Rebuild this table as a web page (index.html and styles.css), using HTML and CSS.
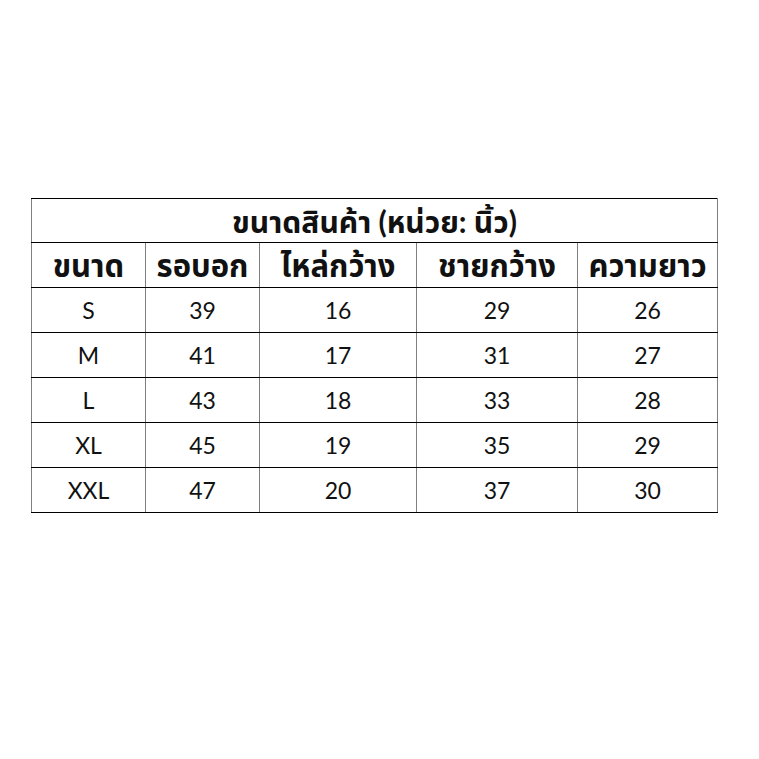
FILE: index.html
```html
<!DOCTYPE html>
<html lang="th">
<head>
<meta charset="utf-8">
<link rel="stylesheet" href="styles.css">
</head>
<body>
<div class="page">
<table class="size-table">
<colgroup>
<col class="c1"><col class="c2"><col class="c3"><col class="c4"><col class="c5">
</colgroup>
<thead>
<tr class="title-row"><th colspan="5">ขนาดสินค้า (หน่วย: นิ้ว)</th></tr>
<tr class="head-row"><th>ขนาด</th><th>รอบอก</th><th>ไหล่กว้าง</th><th>ชายกว้าง</th><th>ความยาว</th></tr>
</thead>
<tbody>
<tr><td>S</td><td>39</td><td>16</td><td>29</td><td>26</td></tr>
<tr><td>M</td><td>41</td><td>17</td><td>31</td><td>27</td></tr>
<tr><td>L</td><td>43</td><td>18</td><td>33</td><td>28</td></tr>
<tr><td>XL</td><td>45</td><td>19</td><td>35</td><td>29</td></tr>
<tr><td>XXL</td><td>47</td><td>20</td><td>37</td><td>30</td></tr>
</tbody>
</table>
</div>
</body>
</html>
```

FILE: styles.css
```css
html, body {
  margin: 0;
  padding: 0;
  background: #ffffff;
}
.page {
  padding: 198px 0 0 31px;
}
.size-table {
  border-collapse: collapse;
  table-layout: fixed;
  width: 686px;
  font-family: "Lato", "Noto Sans Thai", "Noto Sans", sans-serif;
  color: #111111;
  border-left: 1px solid #7f7f7f;
  border-right: 1px solid #7f7f7f;
}
.c1 { width: 114px; }
.c2 { width: 114px; }
.c3 { width: 157px; }
.c4 { width: 161px; }
.c5 { width: 140px; }
.size-table th,
.size-table td {
  border-top: 1px solid #000000;
  border-bottom: 1px solid #000000;
  border-left: 1px solid #7f7f7f;
  border-right: 1px solid #7f7f7f;
  text-align: center;
  padding: 0;
  height: 45px;
  line-height: 1;
  box-sizing: border-box;
}
.size-table th {
  font-weight: 700;
  font-size: 31px;
}
.title-row th {
  height: 44px;
  font-size: 30px;
}
.size-table td {
  font-size: 23px;
  font-weight: 400;
}
```
